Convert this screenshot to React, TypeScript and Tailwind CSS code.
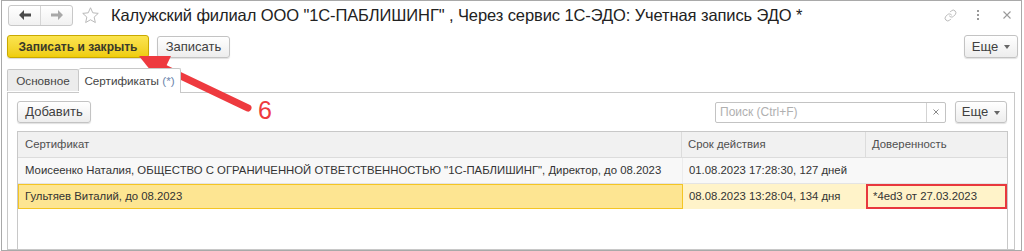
import { Link } from "lucide-react";

function Btn({ children, className = "" }: { children: React.ReactNode; className?: string }) {
    return (
        <div className={`flex items-center justify-center border border-[#c3c3c3] rounded-[3px] bg-linear-to-b from-white to-[#ededed] shadow-[0_1px_1px_rgba(0,0,0,0.12)] text-[13px] text-[#404040] ${className}`}>
            {children}
        </div>
    );
}

function More({ className = "" }: { className?: string }) {
    return (
        <Btn className={`gap-[6px] ${className}`}>
            <span>Еще</span>
            <span className="w-0 h-0 border-x-[3px] border-x-transparent border-t-[4px] border-t-[#666] mt-[1px]" />
        </Btn>
    );
}

function Arrow({ flip, color }: { flip?: boolean; color: string }) {
    return (
        <svg width="12" height="10" viewBox="0 0 12 10" className={flip ? "rotate-180" : ""}>
            <path d="M0 5 L5 0 L5 3.5 L12 3.5 L12 6.5 L5 6.5 L5 10 Z" fill={color} />
        </svg>
    );
}

export default function App() {
    return (
        <div className="relative w-[1024px] h-[251px] overflow-hidden bg-white font-['Liberation_Sans',Arial,sans-serif] text-[#333]">
            <div className="ml-[1px] w-[1021px] h-[251px] border border-[#a9a9a9] px-[5px] flex flex-col">
                {/* title */}
                <div className="h-[28px] shrink-0 flex items-center">
                    <div className="ml-[1px] w-[65px] h-[21px] flex border border-[#c8c8c8] rounded-[3px] bg-linear-to-b from-white to-[#f1f1f1]">
                        <div className="flex-1 flex items-center justify-center border-r border-[#d6d6d6]">
                            <Arrow color="#4a4a4a" />
                        </div>
                        <div className="flex-1 flex items-center justify-center">
                            <Arrow flip color="#a8a8a8" />
                        </div>
                    </div>
                    <svg width="19" height="19" viewBox="0 0 24 24" className="ml-[8px]">
                        <path d="M12 2.2 L14.9 8.6 L21.8 9.3 L16.6 14 L18.1 20.9 L12 17.4 L5.9 20.9 L7.4 14 L2.2 9.3 L9.1 8.6 Z" fill="none" stroke="#b5b5b5" strokeWidth="1.2" strokeLinejoin="round" />
                    </svg>
                    <div className="ml-[11px] text-[16.5px] tracking-[-0.1px] text-[#222] whitespace-nowrap">
                        Калужский филиал ООО "1С-ПАБЛИШИНГ" , Через сервис 1С-ЭДО: Учетная запись ЭДО *
                    </div>
                    <div className="ml-auto flex items-center text-[#9a9a9a]">
                        <Link size={13} strokeWidth={1.4} className="text-[#a5a5a5]" />
                        <div className="ml-[20px] flex flex-col gap-[2px]">
                            <span className="w-[2px] h-[2px] bg-[#999]" />
                            <span className="w-[2px] h-[2px] bg-[#999]" />
                            <span className="w-[2px] h-[2px] bg-[#999]" />
                        </div>
                        <svg width="8" height="8" viewBox="0 0 8 8" className="ml-[24px] mr-[5px]">
                            <path d="M0.5 0.5 L7.5 7.5 M7.5 0.5 L0.5 7.5" stroke="#9a9a9a" strokeWidth="1.1" />
                        </svg>
                    </div>
                </div>

                {/* command bar */}
                <div className="mt-[6px] h-[23px] shrink-0 flex items-center">
                    <div className="w-[142px] h-[23px] flex items-center justify-center border border-[#c9a900] rounded-[3px] bg-linear-to-b from-[#fbe44e] to-[#efcd05] shadow-[0_1px_1px_rgba(0,0,0,0.15)] text-[12px] font-bold text-[#3a3a2a]">
                        Записать и закрыть
                    </div>
                    <Btn className="ml-[8px] w-[73px] h-[22px]">Записать</Btn>
                    <More className="ml-auto -mr-[2px] w-[54px] h-[23px]" />
                </div>

                {/* tabs */}
                <div className="mt-[10px] h-[24px] shrink-0 flex items-end">
                    <div className="w-[72px] h-[22px] flex items-center justify-center border border-[#c8c8c8] border-b-0 rounded-t-[2px] bg-[#ececec] text-[11.7px] text-[#444] mb-[1px]">
                        Основное
                    </div>
                    <div className="relative z-10 w-[102px] h-[25px] -mb-px flex items-center justify-center border border-[#c8c8c8] border-b-0 border-l-0 rounded-t-[2px] bg-white text-[11.7px] text-[#444] pb-[1px]">
                        Сертификаты&nbsp;<span className="text-[#6c86ad]">(*)</span>
                    </div>
                </div>

                {/* panel */}
                <div className="w-[1008px] flex-1 min-h-0 border border-[#c8c8c8] pl-[9px] pr-[6px] pt-[8px] flex flex-col">
                    <div className="h-[22px] shrink-0 flex items-center">
                        <Btn className="w-[74px] h-[22px]">Добавить</Btn>
                        <div className="ml-auto w-[231px] h-[21px] flex border border-[#c3c3c3] rounded-[2px] bg-white">
                            <div className="flex-1 flex items-center pl-[4px] text-[12px] text-[#b0b0b0]">Поиск (Ctrl+F)</div>
                            <div className="w-[19px] flex items-center justify-center border-l border-[#d3d3d3]">
                                <svg width="6" height="6" viewBox="0 0 6 6">
                                    <path d="M0.5 0.5 L5.5 5.5 M5.5 0.5 L0.5 5.5" stroke="#8a8a8a" strokeWidth="1" />
                                </svg>
                            </div>
                        </div>
                        <More className="ml-[9px] mr-[1px] w-[52px] h-[22px]" />
                    </div>

                    <div className="mt-[8px] flex-1 border border-[#c8c8c8] border-b-0 text-[11.35px]">
                        <div className="h-[26px] flex bg-[#f1f1f1] border-b border-[#dcdcdc] text-[#4f4f4f]">
                            <div className="w-[664px] flex items-center pl-[7px] border-r border-[#dcdcdc]">Сертификат</div>
                            <div className="w-[184px] flex items-center pl-[6px] border-r border-[#dcdcdc]">Срок действия</div>
                            <div className="flex-1 flex items-center pl-[6px]">Доверенность</div>
                        </div>
                        <div className="h-[26px] flex bg-[#f8f8f8] border-b border-[#e4e4e4] text-[#333]">
                            <div className="w-[664px] flex items-center pl-[7px] whitespace-nowrap">
                                Моисеенко Наталия, ОБЩЕСТВО С ОГРАНИЧЕННОЙ ОТВЕТСТВЕННОСТЬЮ "1С-ПАБЛИШИНГ", Директор, до 08.2023
                            </div>
                            <div className="w-[184px] flex items-center pl-[6px] border-l border-[#ececec]">01.08.2023 17:28:30, 127 дней</div>
                            <div className="flex-1" />
                        </div>
                        <div className="h-[25px] flex bg-[#fff3c9] text-[#333]">
                            <div className="w-[665px] flex items-center pl-[6px] bg-[#fde592] border-[1.5px] border-[#f4c524]">
                                Гультяев Виталий, до 08.2023
                            </div>
                            <div className="w-[183px] flex items-center pl-[6px]">08.08.2023 13:28:04, 134 дня</div>
                            <div className="flex-1 flex items-center pl-[5px] border-2 border-[#e8383d]">*4ed3 от 27.03.2023</div>
                        </div>
                    </div>
                </div>
            </div>

            {/* annotation */}
            <svg className="absolute left-0 top-0 pointer-events-none" width="1024" height="251">
                <line x1="248" y1="108" x2="162" y2="67" stroke="#ee3a3f" strokeWidth="7" strokeLinecap="round" />
                <polygon points="139,56 171,56 159,81" fill="#ee3a3f" />
            </svg>
            <div className="absolute left-[258px] top-[98px] text-[25px] leading-none text-[#ee3a3f]">6</div>
        </div>
    );
}
